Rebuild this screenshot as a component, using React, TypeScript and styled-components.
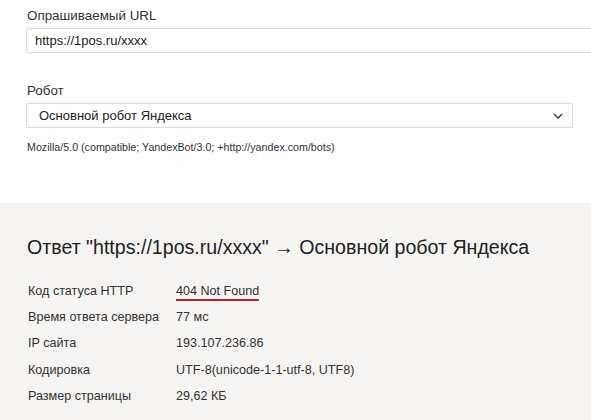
import React from "react";
import styled, { createGlobalStyle } from "styled-components";

const Global = createGlobalStyle`
  html, body { margin: 0; padding: 0; background: #fff; }
  body { font-family: "Liberation Sans", Arial, sans-serif; color: #222; overflow: hidden; }
`;

const Page = styled.div`
  width: 591px;
  height: 420px;
  overflow: hidden;
  display: flex;
  flex-direction: column;
`;

const Form = styled.div`
  background: #fff;
  padding: 8px 18px 0 26px;
  height: 203px;
  flex-shrink: 0;
  box-sizing: border-box;
  display: flex;
  flex-direction: column;
`;

const Label = styled.div`
  font-size: 13.4px;
  line-height: 15px;
  color: #333;
  padding-left: 1px;
`;

const Field = styled.div<{ $overflow?: boolean }>`
  height: 25px;
  box-sizing: border-box;
  border: 1px solid #dcdcdc;
  border-radius: 2px;
  margin-top: 5px;
  margin-right: ${(p) => (p.$overflow ? "-30px" : "0")};
  display: flex;
  align-items: center;
  justify-content: space-between;
  font-size: 13px;
  color: #222;
`;

const InputText = styled.span`
  padding-left: 8px;
`;

const SelectText = styled.span`
  padding-left: 12px;
`;

const Chevron = styled.svg`
  width: 10px;
  height: 6px;
  margin-right: 9px;
`;

const Group = styled.div<{ $gap: number }>`
  margin-top: ${(p) => p.$gap}px;
`;

const Agent = styled.div`
  font-size: 10.7px;
  color: #333;
  margin-top: 13px;
  padding-left: 1px;
`;

const Result = styled.div`
  flex: 1;
  background: #f5f4f2;
  padding: 32px 20px 0 27px;
`;

const Heading = styled.h2`
  margin: 0 0 24px;
  font-size: 19.6px;
  font-weight: 400;
  line-height: 24px;
  color: #222;
`;

const Table = styled.div`
  display: grid;
  grid-template-columns: 148px 1fr;
  font-size: 12.6px;
  color: #333;
`;

const Cell = styled.div`
  height: 26.2px;
  line-height: 16px;
  padding-left: 1px;
`;

const Status = styled.span`
  display: inline-block;
  border-bottom: 2px solid #b5202a;
  line-height: 15px;
`;

const rows: [string, React.ReactNode][] = [
  ["Код статуса HTTP", <Status>404 Not Found</Status>],
  ["Время ответа сервера", "77 мс"],
  ["IP сайта", "193.107.236.86"],
  ["Кодировка", "UTF-8(unicode-1-1-utf-8, UTF8)"],
  ["Размер страницы", "29,62 КБ"],
];

export default function App() {
  return (
    <Page>
      <Global />
      <Form>
        <Group $gap={0}>
          <Label>Опрашиваемый URL</Label>
          <Field $overflow>
            <InputText>https://1pos.ru/xxxx</InputText>
          </Field>
        </Group>
        <Group $gap={30}>
          <Label>Робот</Label>
          <Field>
            <SelectText>Основной робот Яндекса</SelectText>
            <Chevron viewBox="0 0 10 6">
              <path d="M1 1 L5 5 L9 1" fill="none" stroke="#444" strokeWidth="1.5" />
            </Chevron>
          </Field>
        </Group>
        <Agent>Mozilla/5.0 (compatible; YandexBot/3.0; +http://yandex.com/bots)</Agent>
      </Form>
      <Result>
        <Heading>Ответ "https://1pos.ru/xxxx" → Основной робот Яндекса</Heading>
        <Table>
          {rows.map(([k, v], i) => (
            <React.Fragment key={i}>
              <Cell>{k}</Cell>
              <Cell>{v}</Cell>
            </React.Fragment>
          ))}
        </Table>
      </Result>
    </Page>
  );
}
